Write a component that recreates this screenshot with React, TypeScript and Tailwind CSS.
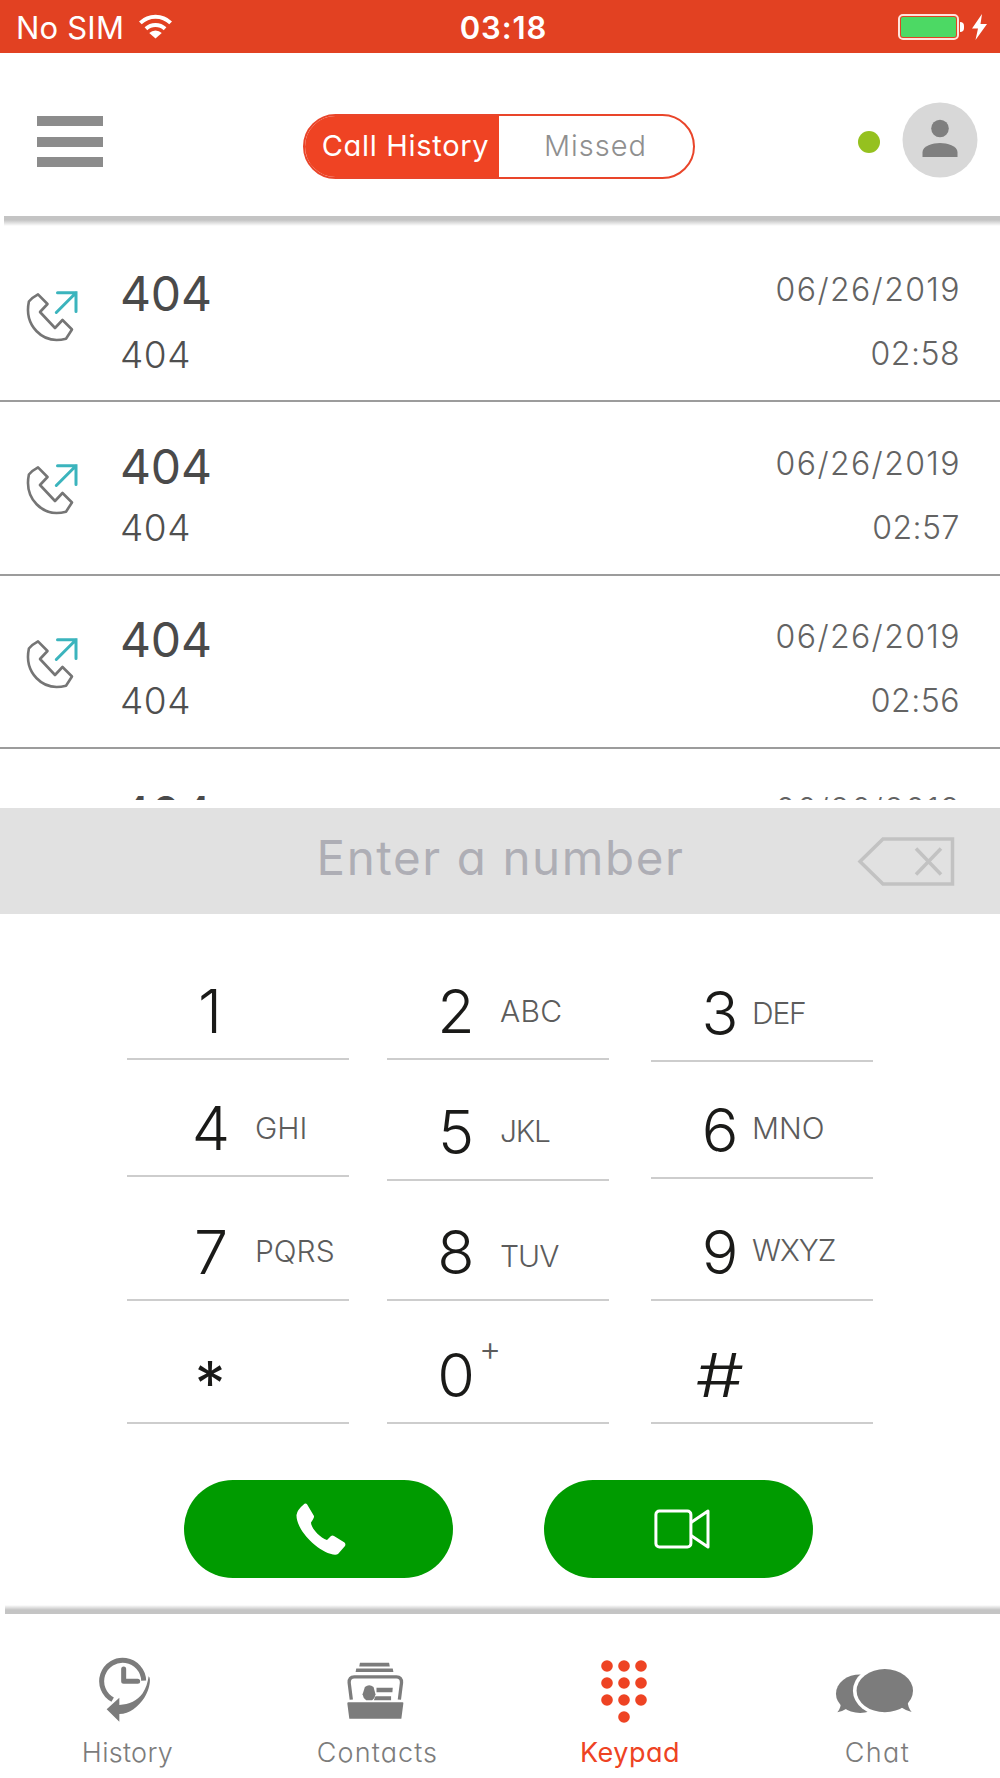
import { clsx } from 'clsx'

interface Call {
  name: string
  number: string
  date: string
  time: string
}

interface PadKey {
  label: string
  letters?: string
  keyClass: string
  labelClass?: string
  lettersClass?: string
}

const calls: Call[] = [
  { name: '404', number: '404', date: '06/26/2019', time: '02:58' },
  { name: '404', number: '404', date: '06/26/2019', time: '02:57' },
  { name: '404', number: '404', date: '06/26/2019', time: '02:56' },
  { name: '404', number: '404', date: '06/26/2019', time: '02:55' },
]

const padColumns: { columnClass: string; keys: PadKey[] }[] = [
  {
    columnClass: 'w-[222px]',
    keys: [
      { label: '1', keyClass: 'h-[146px] pl-[58px]' },
      { label: '4', letters: 'GHI', keyClass: 'h-[117px] pl-[59px]', lettersClass: 'mb-[32px] ml-[19px]' },
      { label: '7', letters: 'PQRS', keyClass: 'h-[124px] pl-[59px]', lettersClass: 'mb-[33px] ml-[19px]' },
      { label: '*', keyClass: 'h-[123px] pl-[58px]', labelClass: 'relative top-[8px] font-normal' },
    ],
  },
  {
    columnClass: 'ml-[38px] w-[222px]',
    keys: [
      { label: '2', letters: 'ABC', keyClass: 'h-[146px] pl-[44px]', lettersClass: 'mb-[32px] ml-[19px] tracking-[0.3px]' },
      { label: '5', letters: 'JKL', keyClass: 'h-[121px] pl-[44px]', lettersClass: 'mb-[33px] ml-[19px] tracking-[-1.2px]' },
      { label: '8', letters: 'TUV', keyClass: 'h-[120px] pl-[44px]', lettersClass: 'mb-[28px] ml-[19px] tracking-[-1px]' },
      { label: '0', letters: '+', keyClass: 'h-[123px] pl-[44px]', lettersClass: 'mb-[56px] -ml-[2px] text-[34px]' },
    ],
  },
  {
    columnClass: 'ml-[42px] w-[222px]',
    keys: [
      { label: '3', letters: 'DEF', keyClass: 'h-[148px] pl-[44px]', lettersClass: 'mb-[32px] ml-[7px] tracking-[-1.2px]' },
      { label: '6', letters: 'MNO', keyClass: 'h-[117px] pl-[44px]', lettersClass: 'mb-[34px] ml-[7px]' },
      { label: '9', letters: 'WXYZ', keyClass: 'h-[122px] pl-[44px]', lettersClass: 'mb-[34px] ml-[7px] tracking-[-1px]' },
      { label: '#', keyClass: 'h-[123px] pl-[44px]', labelClass: 'scale-x-[1.25]' },
    ],
  },
]

function StatusBar() {
  return (
    <div className="flex h-[53px] items-center bg-[#e24122] text-white">
      <div className="flex w-[400px] items-center pl-[16px]">
        <span className="pt-[2px] text-[31px] leading-none tracking-[0.2px]">No SIM</span>
        <svg className="ml-[15px] h-[25px] w-[33px]" viewBox="0 0 100 74" fill="none" stroke="white">
          <path d="M4 26A66 66 0 0 1 96 26" strokeWidth="12" />
          <path d="M21 44A43 43 0 0 1 79 44" strokeWidth="12" />
          <path d="M50 73L31 57A27 27 0 0 1 69 57Z" fill="white" stroke="none" />
        </svg>
      </div>
      <div className="w-[207px] pt-[2px] text-center text-[31px] leading-none font-semibold tracking-[0.9px]">
        03:18
      </div>
      <div className="flex flex-1 items-center justify-end pt-px pr-[13px]">
        <div className="h-[26px] w-[61px] rounded-[5px] border-2 border-[#ffe3dc] p-px">
          <div className="h-full rounded-[2px] bg-[#4cd964]" />
        </div>
        <div className="ml-px h-[10px] w-[4px] rounded-r-[4px] bg-white" />
        <svg className="ml-[8px] h-[26px] w-[15px]" viewBox="0 0 15 26" fill="white">
          <path d="M10 0L0 14.5H6L3.5 26L15 10H8.5Z" />
        </svg>
      </div>
    </div>
  )
}

function Header() {
  return (
    <div className="h-[163px] w-full">
      <div className="flex h-full">
        <div className="mt-[63px] ml-[37px] flex h-[51px] w-[66px] flex-col justify-between">
          <div className="h-[10px] bg-[#8c8c8c]" />
          <div className="h-[10px] bg-[#8c8c8c]" />
          <div className="h-[10px] bg-[#8c8c8c]" />
        </div>
        <div className="mt-[61px] ml-[200px] flex h-[65px] w-[392px] overflow-hidden rounded-full border-2 border-[#e9452a] text-[29px] leading-none">
          <div className="flex w-[194px] items-center justify-center bg-[#ef4323] pb-[3px] pl-[7px] tracking-[0.7px] whitespace-nowrap text-white">
            Call History
          </div>
          <div className="flex flex-1 items-center justify-center pr-px pb-[3px] font-[350] tracking-[1px] text-[#8f8f8f]">
            Missed
          </div>
        </div>
        <div className="mt-[78px] ml-[163px] h-[22px] w-[22px] rounded-full bg-[#95c11f]" />
        <svg className="mt-[49px] ml-[22px] h-[76px] w-[76px]" viewBox="0 0 76 76">
          <circle cx="38" cy="38" r="37.5" fill="#d8d8d8" />
          <circle cx="38" cy="26.5" r="8.8" fill="#7f7f7f" />
          <path d="M20.5 55V50C20.5 44 31 41 38 41S55.5 44 55.5 50V55Z" fill="#7f7f7f" />
        </svg>
      </div>
    </div>
  )
}

function OutgoingCallIcon() {
  return (
    <svg className="mt-[56px] ml-[20px] h-[60px] w-[60px]" viewBox="0 0 60 60" fill="none">
      <path
        d="M18 9.3L27.5 19L20 27L35 43L42.5 35L52 44.5L46 53.7C22 60 4 40 8.9 16.5Q12 12.5 18 9.3Z"
        stroke="#757575"
        strokeWidth="2.6"
        strokeLinejoin="round"
      />
      <path d="M37.5 7.7H56V26.5M56 7.7L36.3 27.5" stroke="#3bb4bd" strokeWidth="3" strokeLinecap="round" />
    </svg>
  )
}

function CallRow({ name, number, date, time }: Call) {
  return (
    <div className="flex h-[173.35px] shrink-0 border-b-2 border-[#9c9c9c]">
      <OutgoingCallIcon />
      <div className="pt-[40.5px] pl-[40px]">
        <div className="text-[48px] leading-none tracking-[-0.2px] text-[#4a4a4a]">{name}</div>
        <div className="mt-[18px] text-[37px] leading-none font-light tracking-[0.6px] text-[#4f4f4f]">{number}</div>
      </div>
      <div className="ml-auto pt-[45.3px] pr-[40px] text-right text-[32px] leading-none font-[350] text-[#636363]">
        <div className="-mr-px tracking-[1.4px]">{date}</div>
        <div className="mt-[32px] tracking-[0.5px]">{time}</div>
      </div>
    </div>
  )
}

function NumberField() {
  return (
    <div className="mt-[8px] flex h-[106px] items-center bg-[#e1e1e1]">
      <div className="ml-[300px] w-[401px] pb-[6px] text-center text-[47.5px] leading-none font-[370] tracking-[1.6px] text-[#aeaeb5]">
        Enter a number
      </div>
      <svg className="ml-[156px] h-[50px] w-[98px]" viewBox="0 0 98 50" fill="none" stroke="#c2c2c2" strokeWidth="3.5">
        <path d="M3 25.500L26 3H95.500V48H26Z" />
        <path d="M59 12.5L84 38.5M84 12.5L59 38.5" />
      </svg>
    </div>
  )
}

function Keypad() {
  return (
    <div className="flex h-[511px] pl-[127px]">
      {padColumns.map(({ columnClass, keys }) => (
        <div key={keys[0].label} className={columnClass}>
          {keys.map(({ label, letters, keyClass, labelClass, lettersClass }) => (
            <div key={label} className={clsx('flex items-end border-b-2 border-[#cdcdcd]', keyClass)}>
              <span
                className={clsx(
                  'mb-[16px] w-[50px] text-center text-[61px] leading-none text-[#1a1a18]',
                  labelClass,
                  label !== '*' && 'font-light',
                )}
              >
                {label}
              </span>
              {letters && (
                <span
                  className={clsx(
                    'leading-none font-[330] text-[#5c5c5c]',
                    letters !== '+' && 'text-[30px]',
                    lettersClass,
                  )}
                >
                  {letters}
                </span>
              )}
            </div>
          ))}
        </div>
      ))}
    </div>
  )
}

function CallButtons() {
  return (
    <div className="mt-[55px] flex pl-[184px]">
      <button className="flex h-[98px] w-[269px] items-center justify-center rounded-full bg-[#009b00]">
        <svg className="ml-[5px] h-[52px] w-[50px]" viewBox="0 0 50 52" fill="white">
          <path d="M8.5 .8Q10 0 11 1.2L18 13Q18.5 14.5 15 19.5C15 25 24 35 31 37L35 33Q36.5 32 38 33L48.5 39.5Q50 41 49 43L42 51Q40.5 52 37 51.5C20 48 0 26 .5 12Q1 7 8.5 .8Z" />
        </svg>
      </button>
      <button className="ml-[91px] flex h-[98px] w-[269px] items-center justify-center rounded-full bg-[#009b00]">
        <svg className="ml-[6px] h-[40px] w-[56px]" viewBox="0 0 56 40" fill="none" stroke="white" strokeWidth="3">
          <rect x="1.9" y="2" width="35" height="36" rx="3.5" />
          <path d="M37 13.5L54 2V38L37 26.5" strokeLinejoin="round" />
        </svg>
      </button>
    </div>
  )
}

function HistoryIcon() {
  return (
    <svg className="h-[66px] w-[52px]" viewBox="0 0 156 198" fill="#7c7c7c">
      <path d="M41 128A63 63 0 1 1 134 71" fill="none" stroke="#7c7c7c" strokeWidth="15" />
      <path
        d="M74 36V73H116"
        fill="none"
        stroke="#7c7c7c"
        strokeWidth="15"
        strokeLinecap="round"
        strokeLinejoin="round"
      />
      <path
        d="M149 58C157 64 152 98 136 122C118 149 92 170 61 171V194L23 157L61 122V144C90 143 116 131 131 109C141 94 146 76 149 58Z"
        stroke="white"
        strokeWidth="6"
        paintOrder="stroke"
      />
    </svg>
  )
}

function ContactsIcon() {
  return (
    <svg className="h-[58px] w-[59px]" viewBox="0 0 178 174" fill="#7c7c7c">
      <path d="M42 2H130L132 13H40ZM31 19H141L143 30H29Z" />
      <path
        d="M16 113L9.5 62Q9 45 25 44.500H152Q168 45 167.500 62L161 113"
        fill="none"
        stroke="#7c7c7c"
        strokeWidth="10"
      />
      <path d="M57 75Q70 64 83 75L89 97Q88 108 79 115H61Q51 108 50 97Z" />
      <path d="M92 77H141L140 91H92ZM89 103H136V115H84Z" />
      <path d="M7 121H170Q174 121 173 125L167 171H10L4 125Q4 121 7 121Z" />
    </svg>
  )
}

function KeypadIcon() {
  const dots = [
    [6, 6], [23, 6], [40, 6],
    [6, 23], [23, 23], [40, 23],
    [6, 40], [23, 40], [40, 40],
    [23, 57],
  ]
  return (
    <svg className="h-[63px] w-[46px]" viewBox="0 0 46 63" fill="#ee4323">
      {dots.map(([cx, cy]) => (
        <circle key={`${cx}-${cy}`} cx={cx} cy={cy} r="5.8" />
      ))}
    </svg>
  )
}

function ChatIcon() {
  return (
    <svg className="h-[46px] w-[79px]" viewBox="0 0 238 138" fill="#7c7c7c">
      <ellipse cx="76" cy="77" rx="73" ry="58" />
      <path d="M16 103Q20 118 7 133Q24 130 36 122Z" />
      <ellipse cx="150" cy="68" rx="96" ry="76" fill="white" />
      <ellipse cx="150" cy="68" rx="85" ry="65" />
      <path d="M199 118Q213 128 231 132Q219 119 219 100Z" />
    </svg>
  )
}

function BottomNav() {
  return (
    <nav className="grid flex-1 grid-cols-4 text-[27px] leading-none font-[350] text-[#7c7c7c]">
      <div className="flex flex-col items-center">
        <div className="mt-[43px] mr-px h-[82px]"><HistoryIcon /></div>
        <span className="ml-[5px] tracking-[0.3px]">History</span>
      </div>
      <div className="flex flex-col items-center">
        <div className="mt-[48px] h-[77px]"><ContactsIcon /></div>
        <span className="ml-[5px] tracking-[1.1px]">Contacts</span>
      </div>
      <div className="flex flex-col items-center">
        <div className="mt-[46px] mr-[2px] h-[79px]"><KeypadIcon /></div>
        <span className="ml-[10px] font-normal tracking-[0.5px] text-[#ee4323]">Keypad</span>
      </div>
      <div className="flex flex-col items-center">
        <div className="mt-[54px] mr-px h-[71px]"><ChatIcon /></div>
        <span className="ml-[5px] tracking-[1.4px]">Chat</span>
      </div>
    </nav>
  )
}

export default function App() {
  return (
    <div className="flex h-[1778px] w-[1000px] flex-col overflow-hidden bg-white font-['Inter',sans-serif] [font-feature-settings:'cv11']">
      <StatusBar />
      <Header />
      <div className="mb-[3px] ml-[4px] h-[10px] bg-linear-to-b from-[#c4c4c4] from-40% to-white" />
      <div className="flex h-[571px] flex-col overflow-hidden">
        {calls.map((call) => (
          <CallRow key={call.time} {...call} />
        ))}
      </div>
      <NumberField />
      <Keypad />
      <CallButtons />
      <div className="mt-[27px] ml-[5px] h-[9px] bg-linear-to-b from-white to-[#c4c4c4] to-55%" />
      <BottomNav />
    </div>
  )
}
